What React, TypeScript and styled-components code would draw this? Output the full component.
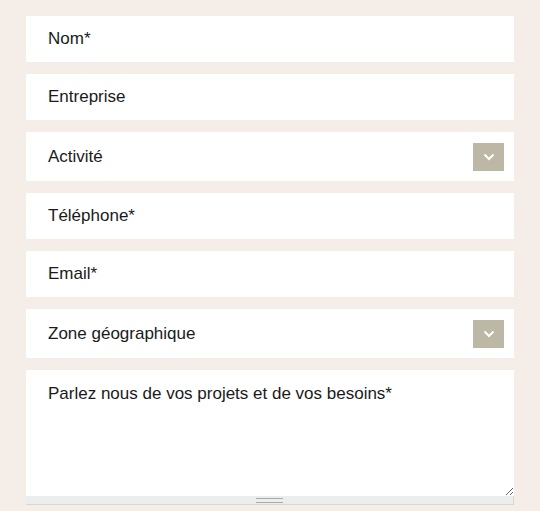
import * as React from 'react'
import styled, { createGlobalStyle } from 'styled-components'

const Global = createGlobalStyle`
    html, body {
        margin: 0;
        padding: 0;
        background: #f5ede8;
        font-family: "Liberation Sans", Arial, sans-serif;
    }
`

const S = {
    Form: styled.form`
        display: flex;
        flex-direction: column;
        gap: 12px;
        padding: 16px 26px 0 26px;
    `,
    Input: styled.input`
        box-sizing: border-box;
        width: 100%;
        height: 46px;
        border: none;
        outline: none;
        background: #fff;
        padding: 0 22px;
        font-family: "Liberation Sans", Arial, sans-serif;
        font-size: 17px;
        color: #1a1a1a;
        &::placeholder {
            color: #1a1a1a;
            opacity: 1;
        }
    `,
    SelectWrap: styled.div`
        height: 49px;
        background: #fff;
        display: flex;
        align-items: center;
    `,
    Select: styled.div`
        flex: 1;
        padding: 0 22px;
        font-size: 17px;
        color: #1a1a1a;
    `,
    Arrow: styled.div`
        width: 31px;
        height: 28px;
        margin-right: 10px;
        background: #bdb7a6;
        display: flex;
        align-items: center;
        justify-content: center;
    `,
    TextWrap: styled.div`
        display: flex;
        flex-direction: column;
    `,
    TextArea: styled.textarea`
        box-sizing: border-box;
        width: 100%;
        height: 126px;
        border: none;
        outline: none;
        background: #fff;
        padding: 14px 22px;
        resize: vertical;
        font-family: "Liberation Sans", Arial, sans-serif;
        font-size: 17px;
        color: #1a1a1a;
        display: block;
        &::placeholder {
            color: #1a1a1a;
            opacity: 1;
        }
    `,
    Grippie: styled.div`
        height: 8px;
        background: #eceded;
        border-bottom: 1px solid #d6d6d6;
        border-right: 1px solid #d6d6d6;
        display: flex;
        justify-content: center;
        align-items: center;
        &::after {
            content: '';
            width: 27px;
            height: 3px;
            border-top: 1px solid #a9a9a9;
            border-bottom: 1px solid #a9a9a9;
        }
    `,
}

const Chevron = () => (
    <svg width="12" height="8" viewBox="0 0 12 8">
        <path d="M1.5 1.5 L6 6 L10.5 1.5" fill="none" stroke="#fff" strokeWidth="2" />
    </svg>
)

const SelectField = ({ label }: { label: string }) => (
    <S.SelectWrap>
        <S.Select>{label}</S.Select>
        <S.Arrow>
            <Chevron />
        </S.Arrow>
    </S.SelectWrap>
)

export default function App() {
    return (
        <>
            <Global />
            <S.Form>
                <S.Input placeholder="Nom*" />
                <S.Input placeholder="Entreprise" />
                <SelectField label="Activité" />
                <S.Input placeholder="Téléphone*" />
                <S.Input placeholder="Email*" />
                <SelectField label="Zone géographique" />
                <S.TextWrap>
                    <S.TextArea placeholder="Parlez nous de vos projets et de vos besoins*" />
                    <S.Grippie />
                </S.TextWrap>
            </S.Form>
        </>
    )
}
